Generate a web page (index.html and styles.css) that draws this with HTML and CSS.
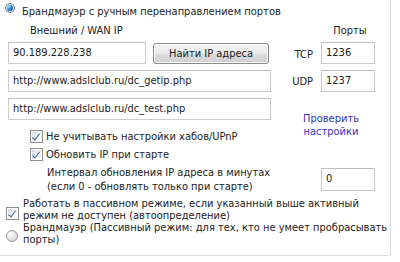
FILE: index.html
```html
<!DOCTYPE html>
<html lang="ru">
<head>
    <meta charset="UTF-8">
    <title>Брандмауэр</title>
    <link rel="stylesheet" href="styles.css">
</head>
<body>
<div class="panel">
    <div class="mode top">
        <span class="radio on"></span>
        <span>Брандмауэр с ручным перенаправлением портов</span>
    </div>

    <div class="grid">
        <div class="cap wan">Внешний / WAN IP</div>
        <div class="cap ports">Порты</div>

        <div class="ip-row">
            <div class="field ip">90.189.228.238</div>
            <div class="btn">Найти IP адреса</div>
        </div>
        <div class="proto">TCP</div>
        <div class="field port">1236</div>

        <div class="field url">http://www.adslclub.ru/dc_getip.php</div>
        <div class="proto">UDP</div>
        <div class="field port">1237</div>

        <div class="field url">http://www.adslclub.ru/dc_test.php</div>
        <a class="check-link">Проверить<br>настройки</a>

        <div class="chk-row"><span class="chk"></span>Не учитывать настройки хабов/UPnP</div>
        <div class="chk-row r6"><span class="chk"></span>Обновить IP при старте</div>

        <div class="interval">Интервал обновления IP адреса в минутах<br>(если 0 - обновлять только при старте)</div>
        <div class="field port mins">0</div>
    </div>

    <div class="mode passive">
        <span class="chk"></span>
        <span>Работать в пассивном режиме, если указанный выше активный<br>режим не доступен (автоопределение)</span>
    </div>
    <div class="mode passive last">
        <span class="radio"></span>
        <span>Брандмауэр (Пассивный режим: для тех, кто не умеет пробрасывать<br>порты)</span>
    </div>
</div>
</body>
</html>
```

FILE: styles.css
```css
body{
    margin: 0;
    background: #fff;
    font-family: "DejaVu Sans Condensed", "DejaVu Sans", sans-serif;
    font-size: 11px;
    color: #222;
}

.panel{
    box-sizing: border-box;
    width: 391px;
    height: 256px;
    border-right: 1px solid #dedede;
    border-bottom: 1px solid #dedede;
    border-bottom-right-radius: 3px;
}

.mode{
    display: flex;
    align-items: flex-start;
    line-height: 12px;
}
.mode.top{
    height: 20px;
    padding: 5px 0 0 5px;
    box-sizing: border-box;
    line-height: 13px;
}
.mode.top .radio{
    margin: -2px 7px 0 0;
}
.mode.passive{
    padding-left: 6px;
    margin-top: 4px;
}
.mode.passive .chk{
    margin: 9px 4px 0 0;
}
.mode.last{
    margin-top: 0;
}
.mode.last .radio{
    margin: 8px 5px 0 0;
    width: 12px;
    height: 12px;
}

/* радио-кнопки */
.radio{
    flex: none;
    width: 10px;
    height: 10px;
    border-radius: 50%;
    border: 1px solid #9a9a9a;
    background: radial-gradient(circle at 35% 30%, #fff 0, #e6e6e6 50%, #c9c9c9 100%);
    box-sizing: border-box;
}
.radio.on{
    border-color: #7d8a99;
    background: radial-gradient(circle at 35% 30%, #9fe0ff 0, #2f8ee0 35%, #14468f 75%, #0d2f66 100%);
    box-shadow: inset 0 0 0 1px #e9eef5;
}

/* чекбоксы */
.chk{
    flex: none;
    width: 13px;
    height: 13px;
    box-sizing: border-box;
    border: 1px solid #8e8f8f;
    background: linear-gradient(135deg, #d3d8df 0, #f4f6f8 60%, #fff 100%) content-box;
    padding: 1px;
    margin-right: 3px;
    position: relative;
}
.chk::after{
    content: "";
    position: absolute;
    left: 3px;
    top: 1px;
    width: 3px;
    height: 7px;
    border: solid #4863a8;
    border-width: 0 1.6px 1.6px 0;
    transform: rotate(38deg);
}

.grid{
    display: grid;
    grid-template-columns: 263px 50px 54px;
    grid-template-rows: 18px 26px 28px 28px 23px 18px 33px;
    padding-left: 8px;
}
.grid > *{
    align-self: end;
}

.cap{
    line-height: 14px;
}
.wan{
    padding-left: 22px;
}
.ports{
    grid-column: 3;
    text-align: center;
    padding-left: 4px;
}

.field{
    box-sizing: border-box;
    height: 22px;
    line-height: 20px;
    border: 1px solid #cdcdcd;
    border-top-color: #bdbdbd;
    background: #fff;
    padding: 0 4px;
    white-space: nowrap;
}

.ip-row{
    display: flex;
    align-items: center;
    gap: 7px;
}
.field.ip{
    width: 138px;
}
.btn{
    box-sizing: border-box;
    width: 116px;
    height: 21px;
    line-height: 19px;
    text-align: center;
    border: 1px solid #8b8b8b;
    border-radius: 3px;
    background: linear-gradient(#f4f4f4, #e9e9e9 50%, #dcdcdc 51%, #cfcfcf);
    box-shadow: inset 0 0 0 1px #fbfbfb;
}

.proto{
    grid-column: 2;
    text-align: right;
    padding-right: 8px;
    line-height: 14px;
    align-self: center;
    margin-top: 8px;
}
.field.port{
    grid-column: 3;
}
.field.url{
    grid-column: 1;
}

.check-link{
    grid-column: 2 / 4;
    grid-row: 4 / 7;
    align-self: center;
    margin: 0 0 4px 31px;
    color: #3535b8;
    line-height: 13px;
    text-align: center;
    width: 58px;
    cursor: pointer;
}

.chk-row{
    grid-column: 1;
    display: flex;
    align-items: center;
    padding-left: 22px;
    line-height: 13px;
}
.chk-row.r6{
    grid-row: 6;
}

.interval{
    grid-column: 1 / 3;
    padding-left: 39px;
    line-height: 14px;
}
.field.mins{
    align-self: center;
    height: 23px;
    margin-top: 4px;
}
```
